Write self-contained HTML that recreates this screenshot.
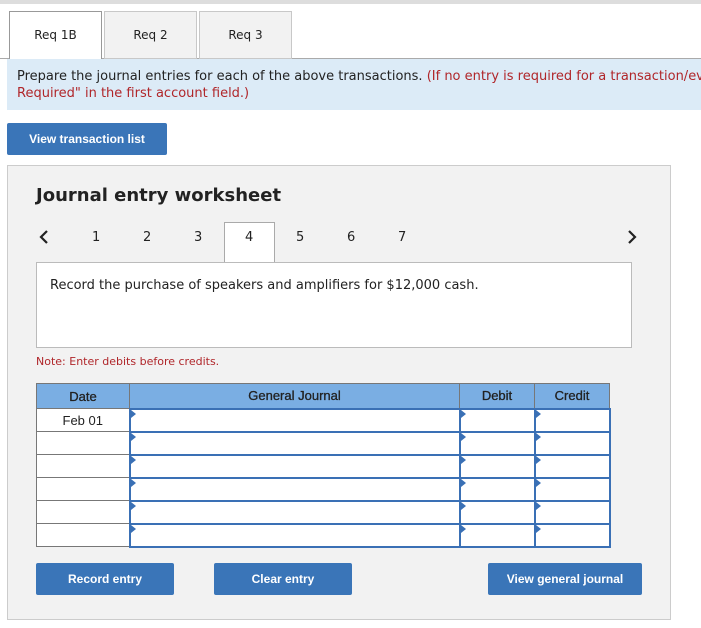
<!DOCTYPE html><html><head><style>
*{box-sizing:border-box}body{margin:0;width:701px;height:628px;overflow:hidden;background:#fff;font-family:Verdana,"DejaVu Sans",sans-serif;font-size:13px;color:#222;position:relative}
.a{position:absolute}
.tab{position:absolute;top:11px;height:48px;width:93px;border:1px solid #c8c8c8;background:#f2f2f2;text-align:center;line-height:46px;font-size:12px}
.btn{position:absolute;background:#3a75b8;color:#fff;font-family:"Liberation Sans",Arial,sans-serif;font-weight:bold;font-size:12px;text-align:center;border-radius:2px}
table{border-collapse:collapse;position:absolute;left:36px;top:383px;font-family:"Liberation Sans",Arial,sans-serif}
td{border:1px solid #777;height:23px;padding:0;background:#fff;position:relative}
th{background:#7aaee3;border:1px solid #777;height:25px;font-weight:normal;font-size:13px;color:#222;-webkit-text-stroke:.3px #222}
td.j{border:2px solid #3a70b5;border-left-width:2px}
td.j:before{content:"";position:absolute;left:0;top:0;border-left:5px solid #3a70b5;border-top:4px solid transparent;border-bottom:4px solid transparent}
</style></head><body>
<div class="a" style="left:0;top:0;width:701px;height:4px;background:#ddd"></div>
<div class="a" style="left:0;top:58px;width:701px;height:1px;background:#aaa"></div>
<div class="tab" style="left:9px;background:#fff;border-color:#999;border-bottom:none;height:49px">Req 1B</div>
<div class="tab" style="left:104px">Req 2</div>
<div class="tab" style="left:199px">Req 3</div>
<div class="a" style="left:7px;top:59px;width:694px;height:51px;background:#dcebf7;padding:9px 0 0 10px;line-height:17px;white-space:nowrap;overflow:hidden">Prepare the journal entries for each of the above transactions. <span style="color:#b0262a">(If no entry is required for a transaction/event, select "No Journal Entry<br>Required" in the first account field.)</span></div>
<div class="btn" style="left:7px;top:123px;width:160px;height:32px;line-height:32px">View transaction list</div>
<div class="a" style="left:7px;top:165px;width:664px;height:455px;background:#f2f2f2;border:1px solid #ccc"></div>
<div class="a" style="left:36px;top:185px;font-size:18px;font-weight:bold">Journal entry worksheet</div>
<svg class="a" style="left:38px;top:230px" width="12" height="14"><path d="M9 1L3 7L9 13" stroke="#222" stroke-width="2.2" fill="none"/></svg>
<svg class="a" style="left:626px;top:230px" width="12" height="14"><path d="M3 1L9 7L3 13" stroke="#222" stroke-width="2.2" fill="none"/></svg>
<div class="a" style="left:224px;top:222px;width:51px;height:41px;background:#fff;border:1px solid #aaa;border-bottom:none"></div>
<div class="a" style="left:92px;top:230px;font-size:13px">1</div>
<div class="a" style="left:143px;top:230px">2</div>
<div class="a" style="left:194px;top:230px">3</div>
<div class="a" style="left:245px;top:230px">4</div>
<div class="a" style="left:296px;top:230px">5</div>
<div class="a" style="left:347px;top:230px">6</div>
<div class="a" style="left:398px;top:230px">7</div>
<div class="a" style="left:36px;top:262px;width:596px;height:86px;background:#fff;border:1px solid #bbb;padding:15px 13px">Record the purchase of speakers and amplifiers for $12,000 cash.</div>
<div class="a" style="left:36px;top:355px;font-size:11px;color:#b0262a">Note: Enter debits before credits.</div>
<table>
<tr><th style="width:93px">Date</th><th style="width:330px">General Journal</th><th style="width:75px">Debit</th><th style="width:75px">Credit</th></tr>
<tr><td style="text-align:center;font-size:13px">Feb 01</td><td class="j"></td><td class="j"></td><td class="j"></td></tr>
<tr><td></td><td class="j"></td><td class="j"></td><td class="j"></td></tr>
<tr><td></td><td class="j"></td><td class="j"></td><td class="j"></td></tr>
<tr><td></td><td class="j"></td><td class="j"></td><td class="j"></td></tr>
<tr><td></td><td class="j"></td><td class="j"></td><td class="j"></td></tr>
<tr><td></td><td class="j"></td><td class="j"></td><td class="j"></td></tr>
</table>
<div class="btn" style="left:36px;top:563px;width:138px;height:32px;line-height:32px">Record entry</div>
<div class="btn" style="left:214px;top:563px;width:138px;height:32px;line-height:32px">Clear entry</div>
<div class="btn" style="left:488px;top:563px;width:154px;height:32px;line-height:32px">View general journal</div>
</body></html>
